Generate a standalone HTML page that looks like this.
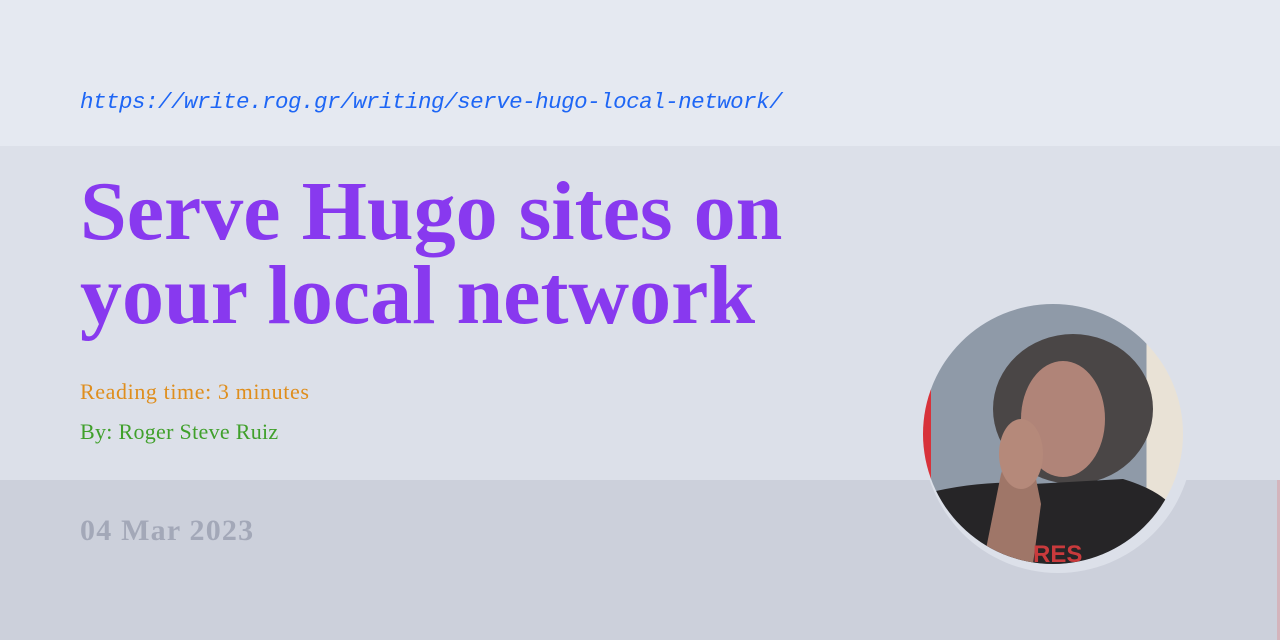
<!DOCTYPE html>
<html><head><style>
html,body{margin:0;padding:0}
body{width:1280px;height:640px;position:relative;overflow:hidden;background:#ccd0db;font-family:"Liberation Serif",serif}
.b1{position:absolute;left:0;top:0;width:1280px;height:146px;background:#e5e9f1}
.b2{position:absolute;left:0;top:146px;width:1280px;height:334px;background:#dce0e9}
.url{position:absolute;left:80px;top:89px;font-family:"Liberation Mono",monospace;font-style:italic;font-size:22.5px;color:#1e66f5;letter-spacing:-0.5px}
h1{position:absolute;left:80px;top:170px;margin:0;font-size:84px;line-height:84px;font-weight:bold;color:#8839ef;letter-spacing:0px;width:820px}
.rt{position:absolute;left:80px;top:379px;font-size:22px;letter-spacing:0.6px;color:#df8e1d}
.by{position:absolute;left:80px;top:419px;font-size:22px;letter-spacing:0.3px;color:#40a02b}
.dt{position:absolute;left:80px;top:514px;font-size:30px;font-weight:bold;color:#a3a8b8;letter-spacing:1.2px}
.ring{position:absolute;left:923px;top:303px;width:270px;height:270px;border-radius:50%;background:#dce0e9}
.av{position:absolute;left:923px;top:304px;width:260px;height:260px;border-radius:50%;overflow:hidden;background:linear-gradient(90deg,#d8323a 0 3%,#8f9aa8 3% 86%,#e9e2d6 86%)}
.edge{position:absolute;left:1277px;top:480px;width:3px;height:160px;background:#d4b4bc}
</style></head><body>
<div class="b1"></div><div class="b2"></div><div class="edge"></div>
<div class="url">https://write.rog.gr/writing/serve-hugo-local-network/</div>
<h1>Serve Hugo sites on your local network</h1>
<div class="rt">Reading time: 3 minutes</div>
<div class="by">By: Roger Steve Ruiz</div>
<div class="dt">04 Mar 2023</div>
<div class="ring"></div>
<div class="av">
<svg width="260" height="260" viewBox="0 0 260 260">
<ellipse cx="150" cy="105" rx="80" ry="75" fill="#4a4646"/>
<ellipse cx="140" cy="115" rx="42" ry="58" fill="#b08478"/>
<path d="M0 190 Q60 175 110 180 L200 175 Q250 190 260 220 L260 260 L0 260Z" fill="#262527"/>
<path d="M60 260 L78 170 Q88 140 108 150 L118 200 L110 260Z" fill="#9f7668"/>
<ellipse cx="98" cy="150" rx="22" ry="35" fill="#b5897a"/>
<text x="110" y="258" fill="#c93a3c" font-size="24" font-weight="bold" font-family="Liberation Sans">RES</text>
</svg>
</div>
</body></html>
